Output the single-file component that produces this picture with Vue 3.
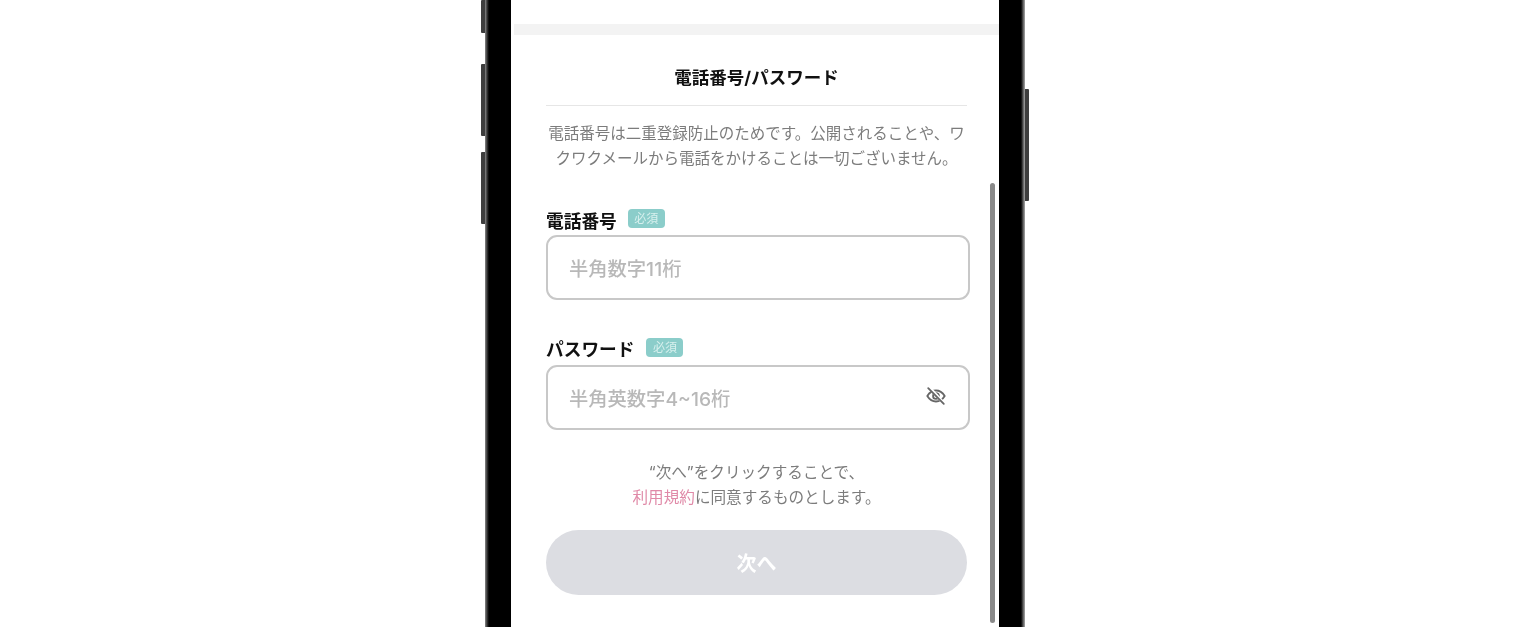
<template>
  <div class="page">
    <div class="phone">
      <span class="side-btn left b1"></span>
      <span class="side-btn left b2"></span>
      <span class="side-btn left b3"></span>
      <span class="side-btn right b4"></span>
      <div class="screen">
        <div class="band"></div>
        <div class="content">
          <h1 class="title">電話番号/パスワード</h1>
          <p class="note">電話番号は二重登録防止のためです。公開されることや、ワクワクメールから電話をかけることは一切ございません。</p>

          <div class="label-row first">
            <span class="label">電話番号</span>
            <span class="badge">必須</span>
          </div>
          <div class="field"><span class="placeholder">半角数字11桁</span></div>

          <div class="label-row second">
            <span class="label">パスワード</span>
            <span class="badge">必須</span>
          </div>
          <div class="field">
            <span class="placeholder">半角英数字4~16桁</span>
            <svg class="eye" viewBox="0 0 24 24" width="22" height="22" fill="none" stroke="#666" stroke-width="2" stroke-linecap="round" stroke-linejoin="round">
              <path d="M2.500 12C5 8 8.200 6 12 6s7 2 9.500 6c-2.500 4-5.700 6-9.500 6s-7-2-9.500-6z" />
              <circle cx="12" cy="12" r="3.200" />
              <path d="M5 3l15.500 17" stroke="#fff" stroke-width="3.500" />
              <path d="M3.500 3.500l17 17" />
            </svg>
          </div>

          <p class="terms">“次へ”をクリックすることで、<br /><span class="link">利用規約</span>に同意するものとします。</p>
          <div class="submit">次へ</div>
        </div>
        <span class="scrollbar"></span>
      </div>
    </div>
  </div>
</template>

<script setup>
</script>

<style scoped>
.page {
  width: 1518px;
  height: 627px;
  background: #fff;
  display: flex;
  justify-content: center;
  overflow: hidden;
  font-family: "Inter", "Noto Sans CJK JP", "Noto Sans", sans-serif;
}
.phone {
  position: relative;
  box-sizing: border-box;
  width: 540px;
  height: 627px;
  margin-right: 8px;
  padding: 0 26px;
  background: linear-gradient(90deg, #8a8a8a 0, #3a3a3a 2px, #000 4px, #000 calc(100% - 4px), #555 calc(100% - 2px), #aaa 100%);
}
.side-btn {
  position: absolute;
  width: 4px;
  background: #3e3e3e;
}
.side-btn.left { left: -4px; border-radius: 1px 0 0 1px; }
.side-btn.right { right: -4px; border-radius: 0 1px 1px 0; }
.b1 { top: 0; height: 33px; }
.b2 { top: 64px; height: 72px; }
.b3 { top: 152px; height: 72px; }
.b4 { top: 89px; height: 112px; }
.screen {
  position: relative;
  height: 627px;
  background: #fff;
  overflow: hidden;
}
.band {
  height: 11px;
  margin: 24px 0 0 3px;
  background: #f3f3f3;
}
.content {
  box-sizing: border-box;
  width: 458px;
  padding-left: 35px;
  filter: blur(0.35px);
}
.title {
  margin: 0;
  padding-top: 29px;
  height: 71px;
  box-sizing: border-box;
  width: 421px;
  border-bottom: 1px solid #e6e6e6;
  font-size: 17.500px;
  line-height: 28px;
  font-weight: 700;
  color: #111;
  text-align: center;
}
.note {
  margin: 15px 0 0;
  width: 421px;
  font-size: 15.500px;
  line-height: 25px;
  color: #7c7c7c;
  text-align: center;
}
.label-row {
  display: flex;
  align-items: flex-start;
  gap: 11px;
  height: 26px;
}
.label-row.first { margin-top: 38px; }
.label-row.second { margin-top: 38px; height: 27px; gap: 12px; }
.label {
  font-size: 17.700px;
  line-height: 26px;
  font-weight: 700;
  color: #111;
}
.second .label { margin-top: -1px; }
.badge {
  box-sizing: border-box;
  width: 37px;
  height: 19px;
  background: #8bcdca;
  border-radius: 4px;
  font-size: 12px;
  line-height: 19px;
  color: #d8f0ee;
  text-align: center;
}
.field {
  box-sizing: border-box;
  display: flex;
  align-items: center;
  justify-content: space-between;
  width: 424px;
  height: 65px;
  padding: 0 21px;
  border: 2px solid #c8c8c8;
  border-radius: 11px;
}
.placeholder {
  font-size: 19.300px;
  font-weight: 500;
  color: #b8b8b8;
}
.eye { margin: 0 0 3px 0; }
.terms {
  margin: 30px 0 0;
  width: 421px;
  font-size: 15.600px;
  line-height: 25px;
  color: #7c7c7c;
  text-align: center;
}
.link { color: #e08aa8; }
.submit {
  width: 421px;
  height: 65px;
  margin-top: 20px;
  border-radius: 33px;
  background: #dcdde2;
  color: #fff;
  font-size: 20px;
  font-weight: 700;
  line-height: 68px;
  text-align: center;
}
.scrollbar {
  position: absolute;
  left: 479px;
  top: 183px;
  width: 5px;
  height: 440px;
  border-radius: 3px;
  background: #8a8a8a;
}
</style>
